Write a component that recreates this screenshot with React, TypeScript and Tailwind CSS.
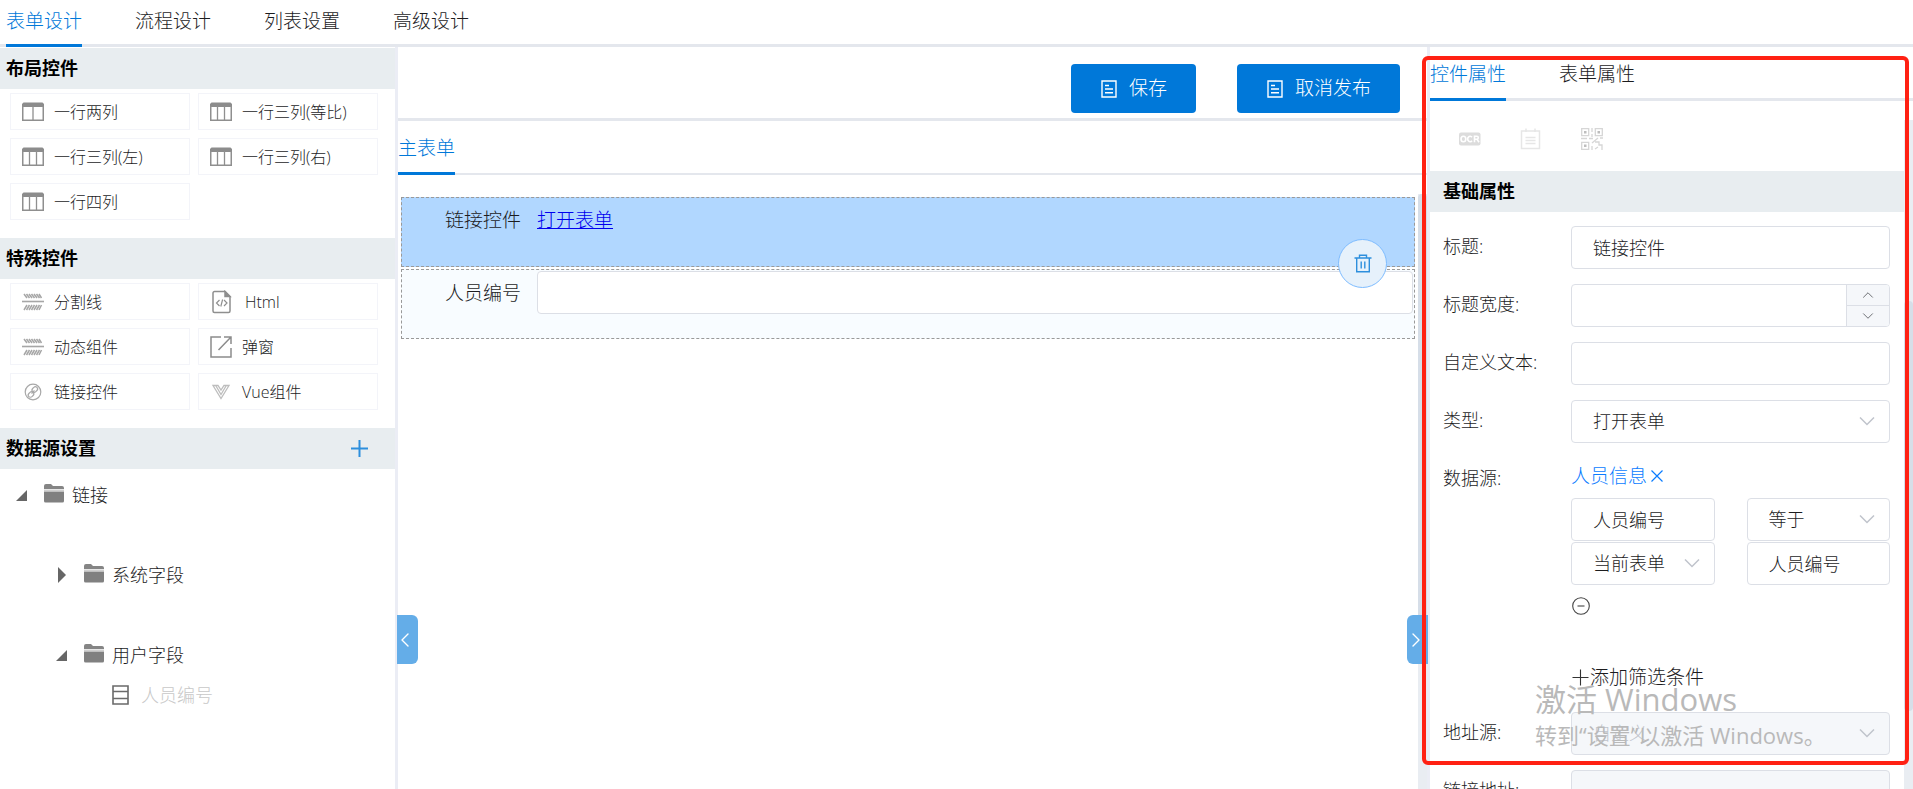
import { useId, useState } from 'react';
import type { ReactNode } from 'react';
import { ChevronDown, ChevronLeft, ChevronRight, ChevronUp } from 'lucide-react';

function ColumnsIcon({ dividers }: { dividers: number[] }) {
  return (
    <svg width="22" height="20" viewBox="0 0 22 20" fill="none" stroke="#8f8f8f">
      <path d="M1.5 .5h19l1.500 1.500V5H0V2z" fill="#8c8c8c" stroke="none" />
      <path d="M.75 4v14.25h20.5V4" strokeWidth="1.5" />
      {dividers.map((x) => (
        <path key={x} d={`M${x} 4v14`} strokeWidth="1.3" />
      ))}
    </svg>
  );
}

function DividerIcon() {
  return (
    <svg width="22" height="18" viewBox="0 0 22 18" fill="none" stroke="#a6a6a6">
      <path d="M0 8.500h22" strokeWidth="1.6" />
      <path
        d="M2 1l3 4M4.500 1l3 4M7 1l3 4M9.500 1l3 4M12 1l3 4M14.500 1l3 4M17 1l2.500 4M2 17l3-5M4.500 17l3-5M7 17l3-5M9.500 17l3-5M12 17l3-5M14.500 17l3-5M17 17l2.500-5"
        strokeWidth="1.5"
      />
    </svg>
  );
}

function HtmlIcon() {
  return (
    <svg width="25" height="24" viewBox="0 0 25 24" fill="none" stroke="#8f8f8f" strokeWidth="1.5">
      <path d="M4.500 1.500H15l5 5v14.500a1.500 1.500 0 0 1-1.500 1.500h-14A1.500 1.500 0 0 1 3 21V3a1.500 1.500 0 0 1 1.500-1.500z" />
      <path d="M15 1.500v5h5z" fill="#8f8f8f" />
      <path d="M9.500 10l-3 3 3 3M14 10l3 3-3 3M12.600 9.500l-1.800 7" strokeWidth="1.2" />
    </svg>
  );
}

function PopupIcon() {
  return (
    <svg width="22" height="22" viewBox="0 0 22 22" fill="none" stroke="#8c8c8c" strokeWidth="1.5">
      <path d="M11 1H1v20h20V12M14 1h7v7M21 1L8.500 14" />
    </svg>
  );
}

function LinkIcon() {
  return (
    <svg width="22" height="18" viewBox="0 0 22 18" fill="none" stroke="#a8a8a8" strokeWidth="1.2">
      <circle cx="11" cy="9" r="7.800" />
      <rect x="9.800" y="4.300" width="6" height="4.400" rx="2.200" transform="rotate(-45 12.800 6.500)" />
      <rect x="6" y="9.300" width="6" height="4.400" rx="2.200" transform="rotate(-45 9 11.500)" />
      <path d="M9.500 10.500l3-3" />
    </svg>
  );
}

function VueIcon() {
  return (
    <svg width="22" height="18" viewBox="0 0 22 18" fill="none" stroke="#bdbdbd" strokeWidth="1.3">
      <path d="M3 2.500h5l3 4.500 3-4.500h5L11 15.500z" />
      <path d="M6 3l5 8.500L16 3" />
    </svg>
  );
}

function DocIcon() {
  return (
    <svg width="16" height="18" viewBox="0 0 16 18" fill="none" stroke="#fff" strokeWidth="1.4">
      <path d="M1 1h14v16H1zM4 5.500h4M4 9h8M4 12.800h8" />
    </svg>
  );
}

function FolderIcon() {
  return (
    <svg width="20" height="19" viewBox="0 0 20 19">
      <path d="M0 2Q0 0 2 0h5l2 2h9q2 0 2 2v1H0z" fill="#858585" />
      <path d="M0 5.500h20v1.500H0z" fill="#cfcfcf" />
      <path d="M0 7.500h20V17q0 1.500-1.500 1.500h-17Q0 18.500 0 17z" fill="#808080" />
    </svg>
  );
}

function TableIcon() {
  return (
    <svg width="17" height="20" viewBox="0 0 17 20" fill="none" stroke="#6a6a6a" strokeWidth="1.6">
      <path d="M1 1h15v18H1zM1 6.500h15M1 13.500h15" />
    </svg>
  );
}

function TrashIcon() {
  return (
    <svg width="18" height="19" viewBox="0 0 18 19" fill="none" stroke="#2d8fdd" strokeWidth="1.4">
      <path d="M.5 4h17M5.500 3.500V1.200h7v2.300M2.700 4v13.800h12.600V4M7.200 7.500v7M10.800 7.500v7" />
    </svg>
  );
}

function OcrIcon() {
  return (
    <svg width="22" height="22" viewBox="0 0 22 22" fill="none">
      <rect x="0" y="4.500" width="21.500" height="13" rx="2" fill="#dcdcdc" />
      <g stroke="#fff" strokeWidth="1.600">
        <ellipse cx="4.400" cy="11" rx="2.400" ry="2.800" />
        <path d="M13 9.300a2.400 2.700 0 1 0 0 3.400M15.500 14.200V8.200h2.300a1.500 1.500 0 0 1 0 3h-2.300M18 11.200l2 3" />
      </g>
    </svg>
  );
}

function NoteIcon() {
  return (
    <svg width="22" height="22" viewBox="0 0 22 22" fill="none" stroke="#e6e6e6" strokeWidth="1.500">
      <path d="M1.500 3h18v17.500h-18zM6 .5V4M15 .5V4M5.500 9.500h10M5.500 12.500h10M5.500 15.500h10" />
    </svg>
  );
}

function QrIcon() {
  return (
    <svg width="22" height="22" viewBox="0 0 22 22" fill="none" stroke="#d6d6d6" strokeWidth="1.300">
      <path d="M.7.7h7v7h-7zM14.300.7h7v7h-7zM.7 14.300h7v7h-7z" />
      <path d="M3 3h2.500v2.500H3zM16.500 3H19v2.500h-2.500zM3 16.500h2.500V19H3z" fill="#bdbdbd" stroke="none" />
      <path d="M11 0v4M11 6v3M0 10.500h6M8 10.500h4M11 15l6-5M19 10h3M11 18v4M14 14h4v3h3v5M14 21l3-2" />
    </svg>
  );
}

const caretPaths = {
  open: 'M15 3v11H4z',
  closed: 'M6 0l8 8-8 8z',
};

function TreeRow({
  indent,
  caret,
  icon,
  label,
  muted,
}: {
  indent: string;
  caret?: 'open' | 'closed';
  icon: ReactNode;
  label: string;
  muted?: boolean;
}) {
  return (
    <div className={`flex h-10 items-center ${indent}`}>
      {caret && (
        <button type="button" aria-label={label} className="mr-4 flex w-4">
          <svg width="16" height="16" viewBox="0 0 16 16">
            <path d={caretPaths[caret]} fill="#666" />
          </svg>
        </button>
      )}
      <span className={muted ? 'pb-px' : 'pb-1'}>{icon}</span>
      <span className={muted ? 'ml-3 text-[18px] text-[#c8c8c8]' : 'ml-2 text-[18px]'}>{label}</span>
    </div>
  );
}

function TabBar({ tabs, line, height, pad }: { tabs: string[]; line: string; height: string; pad: string }) {
  const [active, setActive] = useState(tabs[0]);
  return (
    <nav className={`relative flex shrink-0 gap-[53px] ${height}`}>
      <span className={`absolute inset-x-0 bottom-0 bg-[#e4e7ed] ${line}`} />
      {tabs.map((tab) => (
        <button
          key={tab}
          type="button"
          onClick={() => setActive(tab)}
          className={`relative border-b-3 text-[19px] leading-7 ${pad} ${
            tab === active ? 'border-[#0078d9] text-[#0078d9]' : 'border-transparent'
          }`}
        >
          {tab}
        </button>
      ))}
    </nav>
  );
}

function SectionTitle({ children, action }: { children: ReactNode; action?: ReactNode }) {
  return (
    <div className="flex h-[41px] shrink-0 items-center justify-between bg-[#e8edf0] pr-[27px] pl-[6px] text-[18px] font-bold text-black">
      <h2>{children}</h2>
      {action}
    </div>
  );
}

function Palette({ items }: { items: { label: string; icon: ReactNode }[] }) {
  return (
    <div className="mb-[18px] grid grid-cols-2 gap-2 pt-1 pr-[17px] pl-[10px]">
      {items.map((item) => (
        <button
          key={item.label}
          type="button"
          className="flex h-[37px] items-center gap-[10px] border border-[#f3f4f9] pl-[11px] text-[16px]"
        >
          {item.icon}
          {item.label}
        </button>
      ))}
    </div>
  );
}

const layoutItems = [
  { label: '一行两列', icon: <ColumnsIcon dividers={[11]} /> },
  { label: '一行三列(等比)', icon: <ColumnsIcon dividers={[7.5, 14.5]} /> },
  { label: '一行三列(左)', icon: <ColumnsIcon dividers={[7.5, 14.5]} /> },
  { label: '一行三列(右)', icon: <ColumnsIcon dividers={[7.5, 14.5]} /> },
  { label: '一行四列', icon: <ColumnsIcon dividers={[7.5, 14.5]} /> },
];

const specialItems = [
  { label: '分割线', icon: <DividerIcon /> },
  { label: 'Html', icon: <HtmlIcon /> },
  { label: '动态组件', icon: <DividerIcon /> },
  { label: '弹窗', icon: <PopupIcon /> },
  { label: '链接控件', icon: <LinkIcon /> },
  { label: 'Vue组件', icon: <VueIcon /> },
];

const fieldBox = 'h-[43px] w-full rounded border border-[#dcdfe6] bg-white pl-[21px] text-[18px] font-light';
const textBox = `${fieldBox} pb-[2px]`;

function SelectBox({ id, label, value, disabled }: { id?: string; label?: string; value: string; disabled?: boolean }) {
  return (
    <div className="grid">
      <select
        id={id}
        aria-label={label}
        disabled={disabled}
        className={`col-start-1 row-start-1 appearance-none ${fieldBox} disabled:bg-[#f5f7fa] disabled:text-[#c0c4cc] disabled:opacity-100`}
      >
        <option>{value}</option>
      </select>
      <svg
        className="pointer-events-none col-start-1 row-start-1 mr-[15px] self-center justify-self-end"
        width="16"
        height="10"
        viewBox="0 0 16 10"
        fill="none"
        stroke="#c0c4cc"
        strokeWidth="1.5"
      >
        <path d="M1 .5l7 7 7-7" />
      </svg>
    </div>
  );
}

function Field({ label, children }: { label: string; children: (id: string) => ReactNode }) {
  const id = useId();
  return (
    <div className="flex">
      <label htmlFor={id} className="w-[128px] shrink-0 pt-[6px] text-[18px] leading-7">
        {label}
      </label>
      <div className="min-w-0 flex-1">{children(id)}</div>
    </div>
  );
}

function Properties() {
  return (
    <form className="flex flex-col gap-[15px] pt-[14px] pr-[14px] pl-[13px]">
      <Field label="标题:">{(id) => <input id={id} className={textBox} defaultValue="链接控件" />}</Field>
      <Field label="标题宽度:">
        {(id) => (
          <div className="flex h-[43px] overflow-hidden rounded border border-[#dcdfe6]">
            <input id={id} className="min-w-0 flex-1 pl-[21px] text-[18px]" />
            <div className="flex w-[43px] flex-col border-l border-[#dcdfe6] bg-[#f5f7fa] text-[#606266]">
              <button type="button" aria-label="增加" className="flex flex-1 items-center justify-center border-b border-[#dcdfe6]">
                <ChevronUp size={18} strokeWidth={1.2} />
              </button>
              <button type="button" aria-label="减少" className="flex flex-1 items-center justify-center">
                <ChevronDown size={18} strokeWidth={1.2} />
              </button>
            </div>
          </div>
        )}
      </Field>
      <Field label="自定义文本:">{(id) => <input id={id} className={textBox} />}</Field>
      <Field label="类型:">{(id) => <SelectBox id={id} value="打开表单" />}</Field>
      <Field label="数据源:">
        {(id) => (
          <div>
            <button id={id} type="button" className="flex h-10 items-center gap-1 pb-1 text-[19px] text-[#0a7cff]">
              人员信息
              <svg width="12" height="12" viewBox="0 0 12 12" fill="none" stroke="currentColor" strokeWidth="1.2">
                <path d="M.5.5l11 11M11.500.5l-11 11" />
              </svg>
            </button>
            <div className="grid grid-cols-2 gap-x-8 gap-y-px">
              <input aria-label="字段" className={textBox} defaultValue="人员编号" />
              <SelectBox label="条件" value="等于" />
              <SelectBox label="来源" value="当前表单" />
              <input aria-label="取值" className={textBox} defaultValue="人员编号" />
            </div>
            <button type="button" aria-label="删除条件" className="mt-3 ml-px flex">
              <svg width="18" height="18" viewBox="0 0 18 18" fill="none" stroke="#444" strokeWidth="1.1">
                <circle cx="9" cy="9" r="8.300" />
                <path d="M5.500 9h7" />
              </svg>
            </button>
            <button type="button" className="mt-12 flex items-center gap-px pl-px text-[19px] leading-7">
              <svg width="17" height="17" viewBox="0 0 17 17" fill="none" stroke="#333" strokeWidth="1.1">
                <path d="M.5 8.500h16M8.500.5v16" />
              </svg>
              添加筛选条件
            </button>
          </div>
        )}
      </Field>
      <div className="mt-[6px]">
        <Field label="地址源:">{(id) => <SelectBox id={id} value="自定义" disabled />}</Field>
      </div>
      <Field label="链接地址:">
        {(id) => <input id={id} disabled className="h-[43px] w-full rounded border border-[#dcdfe6] bg-[#f5f7fa]" />}
      </Field>
    </form>
  );
}

const primaryButton =
  'flex h-[49px] items-center gap-3 rounded bg-[#0078d9] pr-[29px] pl-[30px] text-[19px] text-white';

export default function App() {
  return (
    <div className="relative flex h-screen flex-col overflow-hidden bg-white font-['Open_Sans','Noto_Sans_CJK_SC',sans-serif] font-light text-[#1c1c1e]">
      <div className="relative shrink-0 pl-[6px]">
        <span className="absolute bottom-0 left-0 h-[3px] w-[6px] bg-[#e4e7ed]" />
        <TabBar tabs={['表单设计', '流程设计', '列表设置', '高级设计']} line="h-[3px]" height="h-[47px]" pad="pb-[2px]" />
      </div>

      <div className="flex min-h-0 flex-1">
        <aside className="w-[398px] shrink-0 border-r-3 border-[#ebedf5] pt-px">
          <SectionTitle>布局控件</SectionTitle>
          <Palette items={layoutItems} />
          <SectionTitle>特殊控件</SectionTitle>
          <Palette items={specialItems} />
          <SectionTitle
            action={
              <button type="button" aria-label="添加数据源">
                <svg width="17" height="17" viewBox="0 0 17 17" fill="none" stroke="#2d8fdd" strokeWidth="2">
                  <path d="M0 8.500h17M8.500 0v17" />
                </svg>
              </button>
            }
          >
            数据源设置
          </SectionTitle>
          <div className="pt-[6px]">
            <TreeRow indent="pl-3" caret="open" icon={<FolderIcon />} label="链接" />
            <div className="mt-10">
              <TreeRow indent="pl-[52px]" caret="closed" icon={<FolderIcon />} label="系统字段" />
            </div>
            <div className="mt-10">
              <TreeRow indent="pl-[52px]" caret="open" icon={<FolderIcon />} label="用户字段" />
              <TreeRow indent="pl-[112px]" icon={<TableIcon />} label="人员编号" muted />
            </div>
          </div>
        </aside>

        <main className="relative flex min-w-0 flex-1 flex-col">
          <div className="flex h-[74px] shrink-0 items-start justify-end gap-[41px] border-b-3 border-[#e4e7ed] pt-[17px] pr-[27px]">
            <button type="button" className={primaryButton}>
              <DocIcon />
              保存
            </button>
            <button type="button" className={primaryButton}>
              <DocIcon />
              取消发布
            </button>
          </div>
          <TabBar tabs={['主表单']} line="h-[2px]" height="h-[54px]" pad="pt-[2px]" />
          <div className="flex min-h-0 flex-1 pt-[19px]">
            <div className="flex min-w-0 flex-1 flex-col gap-[2px] pt-[3px] pr-[3px] pl-[3px]">
              <div className="relative flex h-[70px] gap-4 border border-dashed border-[#999] bg-[#b1d7ff] pt-2 pl-[43px] text-[19px] leading-7">
                <span>链接控件</span>
                <a href="#form" className="text-[#0000ee] underline">
                  打开表单
                </a>
                <button
                  type="button"
                  aria-label="删除控件"
                  className="absolute right-[27px] -bottom-[22px] z-10 flex size-[49px] items-center justify-center rounded-full border border-[#7ebcff] bg-[#e6f1fb]"
                >
                  <TrashIcon />
                </button>
              </div>
              <div className="flex h-[70px] gap-4 border border-dashed border-[#999] bg-[#f8fcff] pt-px pl-[43px] text-[19px]">
                <label htmlFor="staff-no" className="shrink-0 pt-2 leading-7">
                  人员编号
                </label>
                <input id="staff-no" className="mr-px h-[43px] min-w-0 flex-1 rounded border border-[#dcdfe6] bg-white px-4" />
              </div>
            </div>
            <div className="w-[9px] shrink-0 bg-[#e9edf2]">
              <div className="h-3/4 rounded-t bg-[#d6dee8]" />
            </div>
          </div>
          <button
            type="button"
            aria-label="收起左栏"
            className="absolute bottom-[125px] -left-px flex h-[49px] w-[21px] items-center rounded-r-md bg-[#64ade8] text-white"
          >
            <ChevronLeft className="-ml-1" size={24} strokeWidth={1.4} />
          </button>
          <button
            type="button"
            aria-label="收起右栏"
            className="absolute -right-px bottom-[125px] flex h-[49px] w-[21px] items-center rounded-l-md bg-[#64ade8] text-white"
          >
            <ChevronRight className="-ml-[3px]" size={24} strokeWidth={1.4} />
          </button>
        </main>

        <aside className="flex w-[486px] shrink-0 flex-col border-l-3 border-[#ebedf5] pt-[6px]">
          <TabBar tabs={['控件属性', '表单属性']} line="h-[3px]" height="h-[48px]" pad="pb-[3px]" />
          <div className="flex min-h-0 flex-1 pt-[19px]">
            <div className="min-w-0 flex-1 overflow-hidden">
              <div className="flex h-[51px] gap-[39px] pt-2 pl-[29px]">
                <button type="button" aria-label="OCR" className="flex">
                  <OcrIcon />
                </button>
                <button type="button" aria-label="记录" className="flex">
                  <NoteIcon />
                </button>
                <button type="button" aria-label="二维码" className="flex">
                  <QrIcon />
                </button>
              </div>
              <div className="bg-[#e8edf0] pl-[7px]">
                <SectionTitle>基础属性</SectionTitle>
              </div>
              <Properties />
            </div>
            <div className="w-[9px] shrink-0 bg-[#e9edf2] pt-[181px]">
              <div className="h-[410px] rounded bg-[#d6dee8]" />
            </div>
          </div>
        </aside>
      </div>

      <div className="pointer-events-none absolute top-[56px] right-1 bottom-6 z-20 w-[487px] rounded-md border-4 border-[#ff2113]" />
      <div className="pointer-events-none absolute right-[60px] bottom-[38px] z-30 w-[318px] font-normal text-[#b9b9b9]">
        <p className="text-[31px] leading-10">激活 Windows</p>
        <p className="text-[22px] leading-8 whitespace-nowrap">转到“设置”以激活 Windows。</p>
      </div>
    </div>
  );
}
